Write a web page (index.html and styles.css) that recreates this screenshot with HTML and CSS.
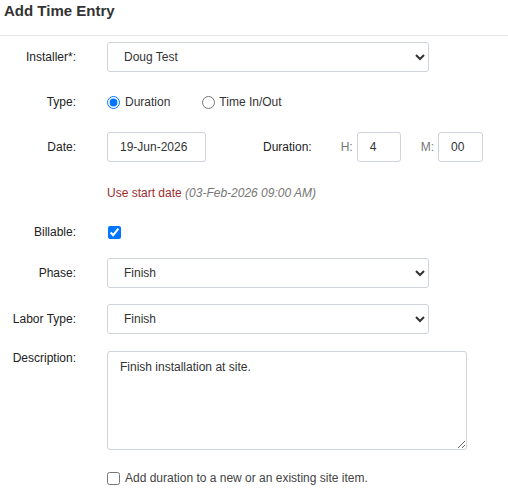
FILE: index.html
```html
<!DOCTYPE html>
<html lang="en">
<head>
    <meta charset="UTF-8">
    <meta name="viewport" content="width=device-width, initial-scale=1.0">
    <title>Add Time Entry</title>
    <link rel="stylesheet" href="styles.css">
</head>
<body>
    <div class="dialog-header">
        <h3>Add Time Entry</h3>
    </div>

    <form class="entry-form" id="timeEntryForm">
        <div class="row row-first">
            <label class="field-label" for="installer">Installer*:</label>
            <select class="field-select" id="installer">
                <option>Doug Test</option>
            </select>
        </div>

        <div class="row">
            <span class="field-label">Type:</span>
            <label class="radio-opt"><input type="radio" name="entryType" checked> Duration</label>
            <label class="radio-opt radio-second"><input type="radio" name="entryType"> Time In/Out</label>
        </div>

        <div class="row">
            <label class="field-label" for="entryDate">Date:</label>
            <input class="field-input date-input" type="text" id="entryDate" value="19-Jun-2026">
            <span class="duration-label">Duration:</span>
            <span class="unit-label">H:</span>
            <input class="field-input hours-input" type="text" id="hours" value="4">
            <span class="unit-label unit-m">M:</span>
            <input class="field-input minutes-input" type="text" id="minutes" value="00">
        </div>

        <div class="row row-hint">
            <span class="field-label"></span>
            <span class="hint"><a class="hint-link">Use start date</a> <i>(03-Feb-2026 09:00 AM)</i></span>
        </div>

        <div class="row row-billable">
            <label class="field-label" for="billable">Billable:</label>
            <input class="check" type="checkbox" id="billable" checked>
        </div>

        <div class="row row-phase">
            <label class="field-label" for="phase">Phase:</label>
            <select class="field-select" id="phase">
                <option>Finish</option>
            </select>
        </div>

        <div class="row row-labor">
            <label class="field-label" for="laborType">Labor Type:</label>
            <select class="field-select" id="laborType">
                <option>Finish</option>
            </select>
        </div>

        <div class="row row-desc">
            <label class="field-label" for="description">Description:</label>
            <textarea class="field-text" id="description">Finish installation at site.</textarea>
        </div>

        <div class="row row-site">
            <span class="field-label"></span>
            <label class="site-opt"><input class="check check-plain" type="checkbox"> Add duration to a new or an existing site item.</label>
        </div>
    </form>
</body>
</html>
```

FILE: styles.css
```css
body {
    margin: 0;
    padding: 0;
    background: #fff;
    font-family: "Liberation Sans", Arial, sans-serif;
    font-size: 12px;
    color: #333;
}

.dialog-header {
    height: 35px;
    border-bottom: 1px solid #e5e5e5;
    padding: 0 4px;
}

.dialog-header h3 {
    margin: 0;
    padding-top: 2px;
    font-size: 15px;
    font-weight: bold;
    color: #333;
    line-height: 18px;
}

.entry-form {
    margin: 0;
}

.row {
    display: flex;
    align-items: center;
    min-height: 30px;
    margin-top: 15px;
}

.row-first {
    margin-top: 6px;
}

.row-hint {
    margin-top: 18px;
    min-height: 26px;
}

.row-billable {
    margin-top: 11px;
}

.row-phase {
    margin-top: 11px;
}

.row-labor {
    margin-top: 16px;
}

.row-desc {
    margin-top: 17px;
    align-items: flex-start;
}

.row-site {
    margin-top: 17px;
    min-height: 22px;
}

.field-label {
    width: 76px;
    flex: none;
    margin-right: 31px;
    text-align: right;
    color: #222;
    line-height: 14px;
}

.field-select {
    width: 322px;
    height: 30px;
    padding: 0 8px 0 12px;
    border: 1px solid #cfd3da;
    border-radius: 3px;
    background: #fff;
    font-family: inherit;
    font-size: 12px;
    color: #333;
}

.field-input {
    box-sizing: border-box;
    height: 30px;
    padding: 0 12px;
    border: 1px solid #cfd3da;
    border-radius: 3px;
    font-family: inherit;
    font-size: 12px;
    color: #333;
}

.date-input {
    width: 99px;
}

.hours-input {
    width: 44px;
}

.minutes-input {
    width: 45px;
}

.duration-label {
    margin-left: 57px;
    color: #222;
}

.unit-label {
    margin-left: 29px;
    margin-right: 4px;
    color: #777;
}

.unit-m {
    margin-left: 20px;
}

.radio-opt {
    display: flex;
    align-items: center;
    color: #333;
}

.radio-opt input {
    margin: 0 5px 0 0;
    width: 13px;
    height: 13px;
}

.radio-second {
    margin-left: 32px;
}

.radio-second input {
    margin-right: 4px;
}

.hint {
    color: #777;
}

.hint-link {
    color: #9b2c2c;
}

.check {
    margin: 0 0 0 1px;
    width: 13px;
    height: 13px;
}

.check-plain {
    margin: 0 5px 0 0;
}

.site-opt {
    display: flex;
    align-items: center;
    color: #444;
}

.field-text {
    box-sizing: border-box;
    width: 360px;
    height: 99px;
    margin: 0;
    padding: 8px 12px;
    border: 1px solid #cfd3da;
    border-radius: 3px;
    font-family: inherit;
    font-size: 12px;
    color: #333;
    resize: both;
}
```
